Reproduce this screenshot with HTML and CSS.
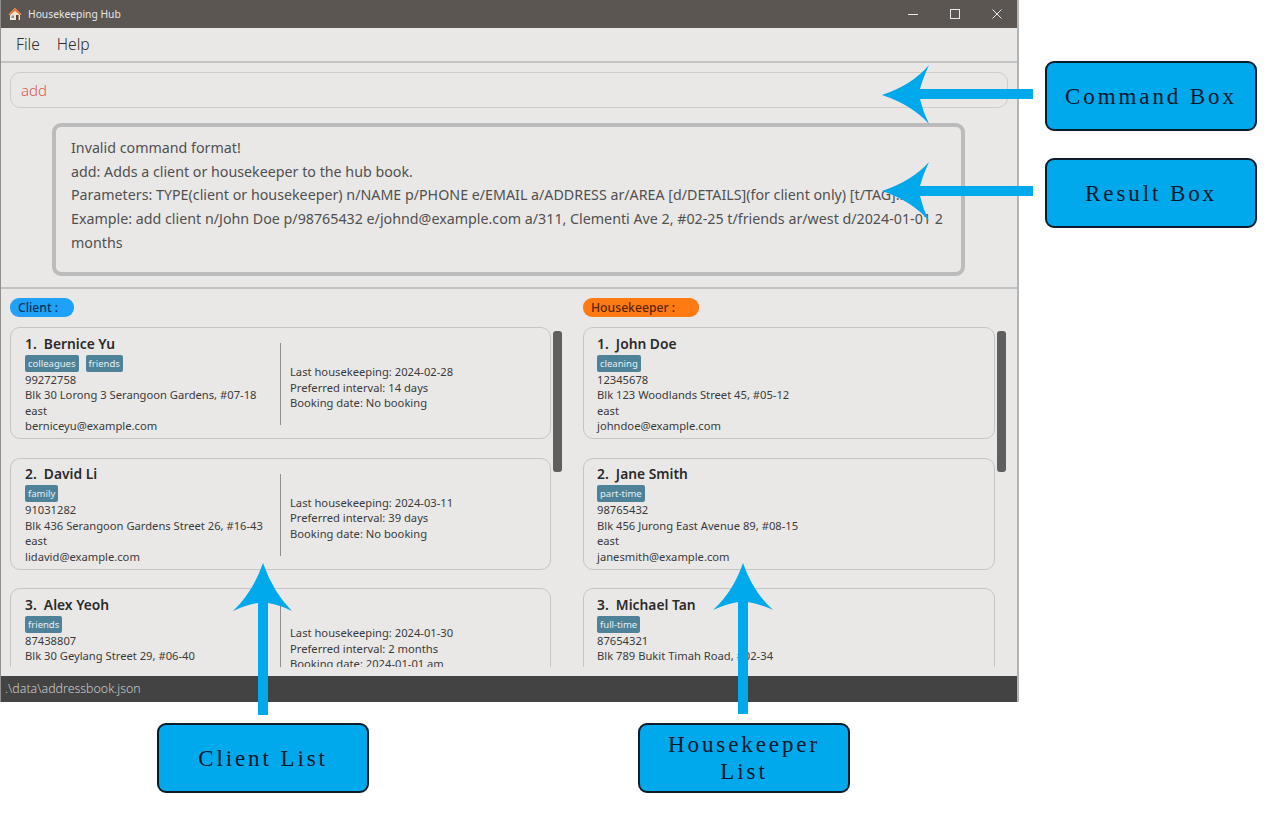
FILE: index.html
```html
<!DOCTYPE html>
<html lang="en">
<head>
    <meta charset="UTF-8">
    <meta name="viewport" content="width=device-width, initial-scale=1.0">
    <title>Housekeeping Hub</title>
    <link rel="stylesheet" href="styles.css">
</head>
<body>
    <div class="window">
        <header class="titlebar">
            <svg class="app-icon" width="14" height="14" viewBox="0 0 14 14">
                <path d="M7 1 L13.5 7.5 L12 7.5 L12 13 L2 13 L2 7.5 L.5 7.5 Z" fill="#efe6d6"/>
                <path d="M7 .8 L13.6 7.4 L11.8 8 L7 4 L2.2 8 L.4 7.4 Z" fill="#e8763a"/>
                <rect x="3.5" y="8.5" width="2.5" height="2.5" fill="#7f98a8"/>
                <rect x="8" y="8" width="2.6" height="5" fill="#5c4432"/>
            </svg>
            <span class="app-title">Housekeeping Hub</span>
            <div class="window-controls">
                <svg width="10" height="10" viewBox="0 0 10 10"><path d="M0 5.5 H10" stroke="#e8e8e8" fill="none"/></svg>
                <svg width="10" height="10" viewBox="0 0 10 10"><rect x=".5" y=".5" width="9" height="9" stroke="#e8e8e8" fill="none"/></svg>
                <svg width="10" height="10" viewBox="0 0 10 10"><path d="M.5 .5 L9.5 9.5 M9.5 .5 L.5 9.5" stroke="#e8e8e8" fill="none"/></svg>
            </div>
        </header>

        <nav class="menubar">
            <span>File</span>
            <span>Help</span>
        </nav>

        <section class="command-area">
            <div class="command-box">add</div>
        </section>

        <section class="result-area">
            <div class="result-box">
                Invalid command format!<br>
                add: Adds a client or housekeeper to the hub book.<br>
                Parameters: TYPE(client or housekeeper) n/NAME p/PHONE e/EMAIL a/ADDRESS ar/AREA [d/DETAILS](for client only) [t/TAG]...<br>
                Example: add client n/John Doe p/98765432 e/johnd@example.com a/311, Clementi Ave 2, #02-25 t/friends ar/west d/2024-01-01 2 months
            </div>
        </section>

        <main class="lists">
            <section class="list-col client-col">
                <div class="list-label label-client">Client :</div>
                <div class="list-body">
                    <div class="cards">
                        <article class="card">
                            <div class="card-main">
                                <div class="card-name">1.&nbsp; Bernice Yu</div>
                                <div class="tags"><span class="tag">colleagues</span><span class="tag">friends</span></div>
                                <div>99272758</div>
                                <div>Blk 30 Lorong 3 Serangoon Gardens, #07-18</div>
                                <div>east</div>
                                <div>berniceyu@example.com</div>
                            </div>
                            <div class="card-side">
                                <div>Last housekeeping: 2024-02-28</div>
                                <div>Preferred interval: 14 days</div>
                                <div>Booking date: No booking</div>
                            </div>
                        </article>
                        <article class="card">
                            <div class="card-main">
                                <div class="card-name">2.&nbsp; David Li</div>
                                <div class="tags"><span class="tag">family</span></div>
                                <div>91031282</div>
                                <div>Blk 436 Serangoon Gardens Street 26, #16-43</div>
                                <div>east</div>
                                <div>lidavid@example.com</div>
                            </div>
                            <div class="card-side">
                                <div>Last housekeeping: 2024-03-11</div>
                                <div>Preferred interval: 39 days</div>
                                <div>Booking date: No booking</div>
                            </div>
                        </article>
                        <article class="card">
                            <div class="card-main">
                                <div class="card-name">3.&nbsp; Alex Yeoh</div>
                                <div class="tags"><span class="tag">friends</span></div>
                                <div>87438807</div>
                                <div>Blk 30 Geylang Street 29, #06-40</div>
                                <div>east</div>
                                <div>alexyeoh@example.com</div>
                            </div>
                            <div class="card-side">
                                <div>Last housekeeping: 2024-01-30</div>
                                <div>Preferred interval: 2 months</div>
                                <div>Booking date: 2024-01-01 am</div>
                            </div>
                        </article>
                    </div>
                    <div class="scrollbar"><div class="thumb"></div></div>
                </div>
            </section>

            <section class="list-col keeper-col">
                <div class="list-label label-keeper">Housekeeper :</div>
                <div class="list-body">
                    <div class="cards">
                        <article class="card">
                            <div class="card-main">
                                <div class="card-name">1.&nbsp; John Doe</div>
                                <div class="tags"><span class="tag">cleaning</span></div>
                                <div>12345678</div>
                                <div>Blk 123 Woodlands Street 45, #05-12</div>
                                <div>east</div>
                                <div>johndoe@example.com</div>
                            </div>
                        </article>
                        <article class="card">
                            <div class="card-main">
                                <div class="card-name">2.&nbsp; Jane Smith</div>
                                <div class="tags"><span class="tag">part-time</span></div>
                                <div>98765432</div>
                                <div>Blk 456 Jurong East Avenue 89, #08-15</div>
                                <div>east</div>
                                <div>janesmith@example.com</div>
                            </div>
                        </article>
                        <article class="card">
                            <div class="card-main">
                                <div class="card-name">3.&nbsp; Michael Tan</div>
                                <div class="tags"><span class="tag">full-time</span></div>
                                <div>87654321</div>
                                <div>Blk 789 Bukit Timah Road, #02-34</div>
                                <div>east</div>
                                <div>michaeltan@example.com</div>
                            </div>
                        </article>
                    </div>
                    <div class="scrollbar"><div class="thumb"></div></div>
                </div>
            </section>
        </main>

        <footer class="statusbar">.\data\addressbook.json</footer>
    </div>

    <!-- Annotations drawn on top of the screenshot -->
    <svg class="arrows" width="1280" height="822" viewBox="0 0 1280 822">
        <path d="M882 95 Q912 85 929 65 Q923 78 920 89 H1033 V99 H920 Q923 112 929 124 Q912 105 882 95 Z"/>
        <path d="M882 191 Q912 181 929 162 Q923 175 920 186 H1033 V196 H920 Q923 209 929 221 Q912 201 882 191 Z"/>
        <path d="M263 563 Q273 592 292 611 Q280 605 268 603 V715 H258 V603 Q246 605 233 611 Q253 592 263 563 Z"/>
        <path d="M743 563 Q753 592 773 610 Q760 604 748 602 V714 H738 V602 Q726 604 713 610 Q733 592 743 563 Z"/>
    </svg>
    <div class="callout callout-command">Command Box</div>
    <div class="callout callout-result">Result Box</div>
    <div class="callout callout-client">Client List</div>
    <div class="callout callout-keeper">Housekeeper<br>List</div>
</body>
</html>
```

FILE: styles.css
```css
/* Window */
body {
    margin: 0;
    padding: 0;
    background-color: #ffffff;
    font-family: "Noto Sans", "Open Sans", sans-serif;
    color: #2e2e2e;
}

.window {
    width: 1019px;
    height: 702px;
    box-sizing: border-box;
    display: flex;
    flex-direction: column;
    background-color: #e9e8e7;
    border-left: 1px solid #8f8f8f;
    border-right: 2px solid #b4b4b4;
    overflow: hidden;
}

.titlebar {
    height: 28px;
    flex: none;
    display: flex;
    align-items: center;
    background-color: #5b5651;
    color: #e6e6e6;
    font-size: 10.3px;
    padding: 0 17px 0 8px;
    margin: 0 -2px 0 -1px;
}

.app-icon {
    margin-right: 6px;
}

.window-controls {
    margin-left: auto;
    display: flex;
    gap: 32px;
}

.menubar {
    height: 31px;
    flex: none;
    display: flex;
    align-items: center;
    gap: 17px;
    padding: 0 0 2px 15px;
    font-size: 15.6px;
    font-weight: 300;
    color: #2e2e2e;
    border-bottom: 2px solid #c2c2c2;
}

/* Command and result */
.command-area {
    flex: none;
    padding: 9px 9px 0;
}

.command-box {
    height: 36px;
    box-sizing: border-box;
    border: 1px solid #cfcdcc;
    border-radius: 10px;
    padding-left: 10px;
    line-height: 34px;
    font-size: 15px;
    font-weight: 300;
    color: #d4604f;
}

.result-area {
    flex: none;
    padding: 15px 52px 11px 51px;
    border-bottom: 2px solid #c2c2c2;
}

.result-box {
    height: 153px;
    box-sizing: border-box;
    border: 4px solid #bcbbbb;
    border-radius: 9px;
    padding: 9px 15px;
    font-size: 14.25px;
    line-height: 23.7px;
    color: #505050;
}

/* Lists */
.lists {
    flex: 1;
    min-height: 0;
    display: flex;
    padding: 9px 0 0 9px;
}

.client-col {
    width: 554px;
}

.keeper-col {
    width: 425px;
    margin-left: 19px;
}

.list-label {
    height: 19px;
    box-sizing: border-box;
    border-radius: 9px;
    padding-left: 8px;
    font-size: 12.2px;
    font-weight: 500;
    line-height: 19px;
}

.label-client {
    width: 64px;
    background-color: #1ea1f7;
    color: #06315a;
}

.label-keeper {
    width: 116px;
    background-color: #ff7a12;
    color: #5a2400;
}

.list-body {
    display: flex;
    height: 340px;
    margin-top: 10px;
    overflow: hidden;
}

.cards {
    flex: 1;
    min-width: 0;
    display: flex;
    flex-direction: column;
    gap: 18.5px;
}

.card {
    flex: none;
    height: 112px;
    box-sizing: border-box;
    display: flex;
    align-items: center;
    border: 1px solid #c6c5c4;
    border-radius: 10px;
    padding-left: 13px;
    font-size: 11.2px;
    line-height: 15.5px;
    color: #3a3a3a;
}

.client-col .card {
    padding-left: 14px;
}

.card-main {
    width: 255px;
    flex: none;
    padding-top: 1px;
}

.card-name {
    font-size: 13.8px;
    font-weight: 600;
    line-height: 19px;
    color: #2a2a2a;
}

.tags {
    display: flex;
    gap: 7px;
    margin: 2px 0 0;
}

.tag {
    height: 17px;
    padding: 0 3px;
    border-radius: 2px;
    background-color: #4d8298;
    color: #e8eff2;
    font-size: 9.5px;
    line-height: 17px;
}

.card-side {
    height: 82px;
    box-sizing: border-box;
    display: flex;
    flex-direction: column;
    justify-content: center;
    margin-top: 2px;
    padding: 7px 0 0 9px;
    border-left: 1px solid #8f8f8f;
}

.scrollbar {
    width: 13px;
    flex: none;
    padding: 4px 0 0 2px;
    box-sizing: border-box;
}

.thumb {
    width: 9px;
    height: 141px;
    border-radius: 3px;
    background-color: #5f5f5f;
}

.statusbar {
    height: 26px;
    flex: none;
    margin-left: -1px;
    padding-left: 5px;
    background-color: #434343;
    color: #cccccc;
    font-size: 12.4px;
    font-weight: 300;
    line-height: 26px;
}

/* Annotations */
.arrows {
    position: absolute;
    top: 0;
    left: 0;
    fill: #00a8ec;
}

.callout {
    position: absolute;
    width: 212px;
    height: 70px;
    box-sizing: border-box;
    display: flex;
    align-items: center;
    justify-content: center;
    text-align: center;
    border: 2px solid #0d1b2a;
    border-radius: 9px;
    background-color: #00a8ec;
    color: #04182b;
    font-family: "Liberation Serif", serif;
    font-size: 23px;
    line-height: 27px;
    letter-spacing: 2.9px;
}

.callout-command {
    left: 1045px;
    top: 61px;
}

.callout-result {
    left: 1045px;
    top: 158px;
}

.callout-client {
    left: 157px;
    top: 723px;
}

.callout-keeper {
    left: 638px;
    top: 723px;
}
```
